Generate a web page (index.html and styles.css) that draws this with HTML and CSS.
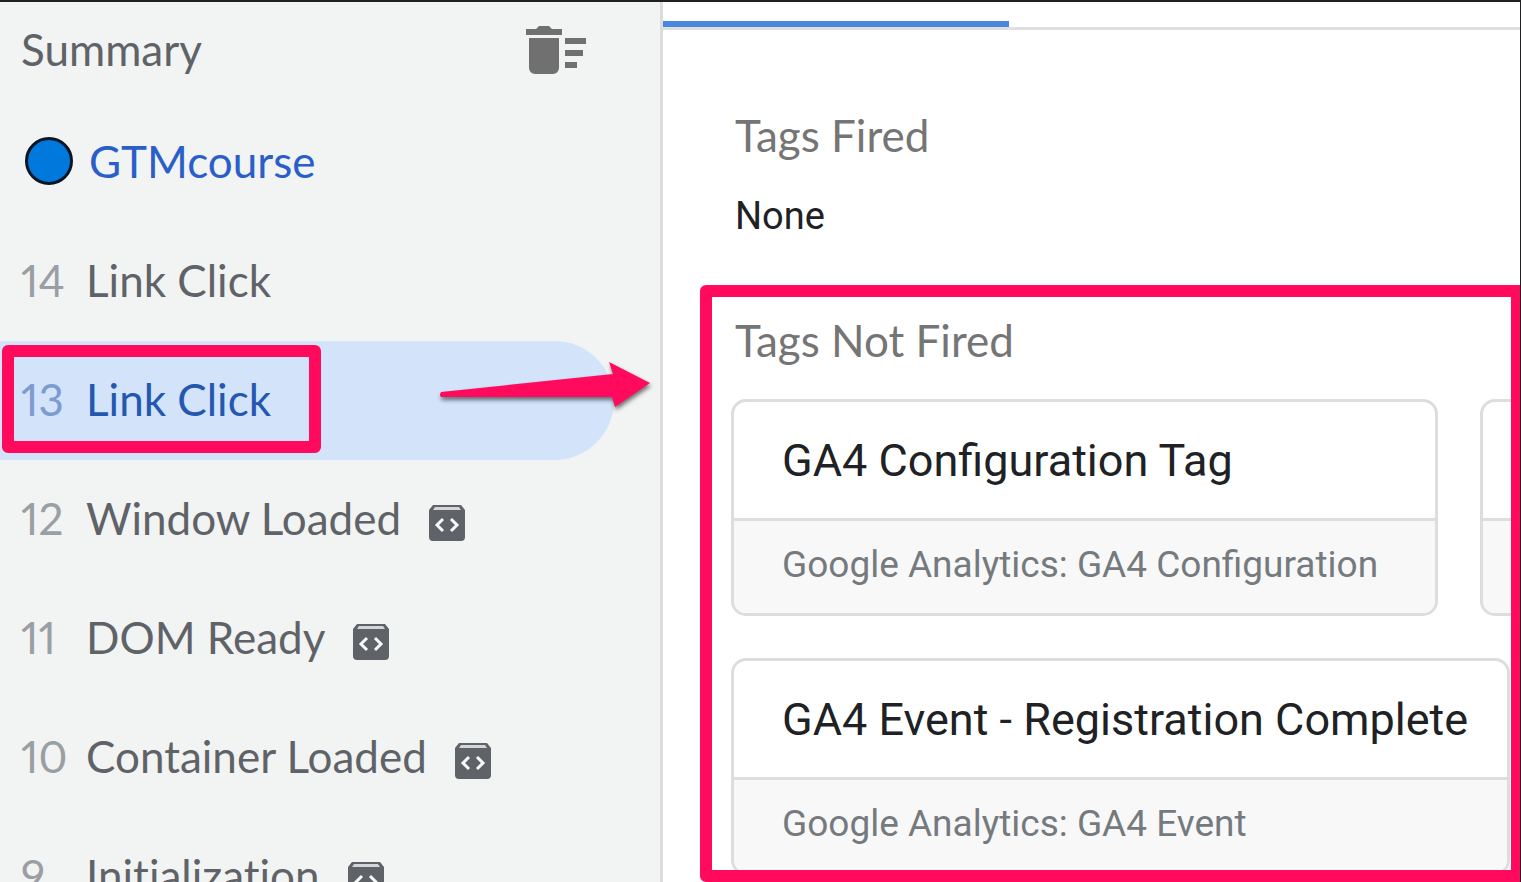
FILE: index.html
```html
<!DOCTYPE html>
<html lang="en">
<head>
<meta charset="utf-8">
<title>Tag Assistant</title>
<link rel="stylesheet" href="styles.css">
</head>
<body>
<svg width="0" height="0" class="defs" aria-hidden="true">
  <symbol id="code" viewBox="0 0 36 36">
    <path fill="#5f6368" d="M4 0h28l4 5v27a4 4 0 0 1-4 4H4a4 4 0 0 1-4-4V5z"/>
    <path fill="#d5d6d8" d="M6 2h24l2 3H4z"/>
    <path fill="none" stroke="#f8f8f8" stroke-width="3" d="M14 14l-6 6 6 6M22 14l6 6-6 6"/>
  </symbol>
</svg>
<div class="app">
  <aside class="sidebar">
    <header class="summary">
      <h2 class="summary-title">Summary</h2>
      <button class="clear" type="button" aria-label="Clear events">
        <svg viewBox="0 0 60 48" width="60" height="48" fill="#707070"><path d="M0 3h10l3-3h10l3 3h10v6H0zM3 12h30v30a6 6 0 0 1-6 6H9a6 6 0 0 1-6-6zM39 12h21v6H39zM39 24h18v6H39zM39 36h12v6H39z"/></svg>
      </button>
    </header>
    <a class="container-link" href="#"><span class="dot"></span>GTMcourse</a>
    <nav class="events">
      <a class="event" href="#"><span class="num">14</span><span>Link Click</span></a>
      <a class="event selected" href="#"><span class="num">13</span><span>Link Click</span>
        <span class="mark"></span>
        <svg class="arrow" viewBox="0 0 216 56" width="216" height="56"><path fill="#ff0a5c" d="M2 34L174 16 170 4 211 25 176 49 173 39 2 39Q0 37 2 34z"/></svg>
      </a>
      <a class="event" href="#"><span class="num">12</span><span>Window Loaded</span><svg class="code"><use href="#code"/></svg></a>
      <a class="event" href="#"><span class="num">11</span><span>DOM Ready</span><svg class="code"><use href="#code"/></svg></a>
      <a class="event" href="#"><span class="num">10</span><span>Container Loaded</span><svg class="code"><use href="#code"/></svg></a>
      <a class="event" href="#"><span class="num">9</span><span>Initialization</span><svg class="code"><use href="#code"/></svg></a>
    </nav>
  </aside>
  <main class="main">
    <div class="tabs"><div class="tab-active"></div></div>
    <section class="fired">
      <h3 class="heading">Tags Fired</h3>
      <p class="none">None</p>
    </section>
    <section class="not-fired">
      <h3 class="heading">Tags Not Fired</h3>
      <div class="cards">
        <div class="card-row">
          <article class="card"><h4 class="name">GA4 Configuration Tag</h4><p class="type">Google Analytics: GA4 Configuration</p></article>
          <article class="card next"><div class="name"></div><div class="type"></div></article>
        </div>
        <div class="card-row">
          <article class="card wide"><h4 class="name">GA4 Event - Registration Complete</h4><p class="type">Google Analytics: GA4 Event</p></article>
        </div>
      </div>
    </section>
  </main>
</div>
</body>
</html>
```
FILE: styles.css
```css
* { box-sizing: border-box; }
body { margin: 0; font-family: Roboto, sans-serif; background: #fff; color: #202124; }
h2, h3, h4, p { margin: 0; font-weight: 400; }
a { color: inherit; text-decoration: none; }
.defs { position: absolute; }
.app { display: grid; grid-template-columns: 663px minmax(0, 1fr); grid-template-rows: minmax(0, 1fr); height: 100vh; overflow: hidden; border-top: 2px solid #202022; border-right: 1px solid #202022; }
.sidebar { background: #f2f3f3; border-right: 3px solid #dadcde; font-family: Lato, sans-serif; font-size: 44px; line-height: 50px; font-variant-ligatures: none; font-variant-numeric: proportional-nums; color: #5f6368; overflow: hidden; }
.summary { display: flex; justify-content: space-between; align-items: flex-start; height: 101px; padding: 22px 74px 0 21px; }
.summary-title { font-size: 44px; line-height: 50px; }
.clear { display: flex; padding: 2px 0 0; border: 0; background: none; }
.container-link { display: flex; align-items: center; gap: 16px; height: 119px; padding: 0 0 4px 25px; color: #2a5fc9; }
.dot { width: 48px; height: 48px; border: 3px solid #071626; border-radius: 50%; background: #0078dc; }
.event { position: relative; display: flex; align-items: center; height: 119px; margin-right: 46px; padding: 0 0 4px 21px; }
.num { width: 65px; color: #9a9fa3; }
.selected { background: #d2e3fa; border-radius: 0 60px 60px 0; color: #2458b0; }
.selected .num { color: #7d9bd0; }
.code { width: 36px; height: 36px; margin: 10px 0 0 28px; }
.mark { position: absolute; left: 2px; top: 4px; width: 319px; height: 108px; border: 12px solid #ff0a5c; border-radius: 6px; }
.arrow { position: absolute; left: 439px; top: 17px; filter: drop-shadow(1px 3px 2px #0008); }
.main { display: flex; flex-direction: column; min-width: 0; background: #fff; }
.tabs { flex: none; height: 28px; padding-top: 19px; border-bottom: 3px solid #dedfe0; }
.tab-active { width: 346px; height: 6px; background: #4a86dc; }
.fired { padding: 80px 0 0 72px; }
.heading { font-family: Lato, sans-serif; font-size: 44px; line-height: 50px; color: #757575; }
.none { margin-top: 32px; font-size: 38px; line-height: 48px; }
.not-fired { flex: 1; margin: 45px 0 0 37px; padding: 18px 0 0 19px; border: 12px solid #ff0a5c; border-right-width: 9px; border-radius: 6px 0 0 6px; overflow: hidden; min-height: 0; }
.not-fired .heading { padding-left: 4px; }
.cards { display: flex; flex-direction: column; gap: 42px; margin-top: 34px; }
.card-row { display: flex; gap: 42px; }
.card { flex: none; width: 707px; border: 3px solid #dcddde; border-radius: 15px; overflow: hidden; white-space: nowrap; }
.wide { width: 779px; }
.name { height: 119px; padding: 32px 48px 0; border-bottom: 3px solid #dcddde; font-size: 45px; line-height: 54px; }
.type { height: 92px; padding: 22px 48px; background: #f8f8f9; font-size: 37px; line-height: 44px; color: #757a7e; }
```
